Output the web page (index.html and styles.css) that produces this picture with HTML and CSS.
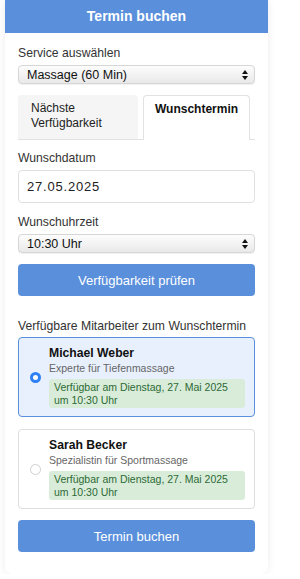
FILE: index.html
```html
<!DOCTYPE html>
<html lang="de">
<head>
    <meta charset="UTF-8">
    <meta name="viewport" content="width=device-width, initial-scale=1.0">
    <title>Termin buchen</title>
    <link rel="stylesheet" href="styles.css">
</head>
<body>
    <div class="booking">
        <div class="booking-header">Termin buchen</div>

        <div class="booking-body">
            <label class="field-label">Service auswählen</label>
            <div class="select">Massage (60 Min)<span class="select-arrows"></span></div>

            <!-- Tabs -->
            <div class="tabs">
                <div class="tab">Nächste Verfügbarkeit</div>
                <div class="tab tab-active">Wunschtermin</div>
            </div>

            <label class="field-label">Wunschdatum</label>
            <div class="date-input">27.05.2025</div>

            <label class="field-label">Wunschuhrzeit</label>
            <div class="select">10:30 Uhr<span class="select-arrows"></span></div>

            <button class="btn">Verfügbarkeit prüfen</button>

            <label class="field-label section-label">Verfügbare Mitarbeiter zum Wunschtermin</label>

            <div class="staff staff-selected">
                <span class="radio radio-checked"></span>
                <div class="staff-info">
                    <div class="staff-name">Michael Weber</div>
                    <div class="staff-role">Experte für Tiefenmassage</div>
                    <div class="staff-slot">Verfügbar am Dienstag, 27. Mai 2025 um 10:30 Uhr</div>
                </div>
            </div>

            <div class="staff">
                <span class="radio"></span>
                <div class="staff-info">
                    <div class="staff-name">Sarah Becker</div>
                    <div class="staff-role">Spezialistin für Sportmassage</div>
                    <div class="staff-slot">Verfügbar am Dienstag, 27. Mai 2025 um 10:30 Uhr</div>
                </div>
            </div>

            <button class="btn">Termin buchen</button>
        </div>
    </div>
</body>
</html>
```

FILE: styles.css
```css
* {
    margin: 0;
    padding: 0;
    box-sizing: border-box;
}

body {
    font-family: 'Liberation Sans', Arial, sans-serif;
    background-color: #fff;
    color: #222;
}

.booking {
    width: 263px;
    margin-left: 5px;
    background-color: #fff;
    border-radius: 0 0 8px 8px;
    box-shadow: 0 0 8px rgba(0, 0, 0, 0.08);
    overflow: hidden;
}

.booking-header {
    height: 33px;
    line-height: 33px;
    background-color: #5a8fdc;
    color: #fff;
    font-size: 14px;
    font-weight: bold;
    text-align: center;
}

.booking-body {
    display: flex;
    flex-direction: column;
    padding: 12px 13px 22px;
}

.field-label {
    font-size: 12.2px;
    line-height: 16px;
    color: #333;
    margin-bottom: 4px;
}

.select {
    position: relative;
    height: 19px;
    line-height: 18px;
    padding-left: 8px;
    font-size: 12.5px;
    color: #111;
    border: 1px solid #d6d6d6;
    border-radius: 4px;
    background: linear-gradient(#fdfdfd, #e9e9e9);
    box-shadow: 0 1px 1px rgba(0, 0, 0, 0.06);
}

.select-arrows {
    position: absolute;
    right: 6px;
    top: 4px;
    width: 6px;
    height: 10px;
}

.select-arrows::before,
.select-arrows::after {
    content: '';
    position: absolute;
    left: 0;
    border-left: 3px solid transparent;
    border-right: 3px solid transparent;
}

.select-arrows::before {
    top: 0;
    border-bottom: 4px solid #111;
}

.select-arrows::after {
    bottom: 0;
    border-top: 4px solid #111;
}

/* Tabs */
.tabs {
    display: flex;
    gap: 5px;
    margin-top: 11px;
    margin-bottom: 10px;
    border-bottom: 1px solid #e2e2e2;
}

.tab {
    width: 120px;
    height: 44px;
    padding: 6px 13px 0;
    font-size: 12px;
    line-height: 15px;
    color: #222;
    background-color: #f5f5f5;
    border-radius: 4px 4px 0 0;
}

.tab-active {
    width: 107px;
    padding: 6px 0 0;
    margin-bottom: -1px;
    height: 45px;
    text-align: center;
    font-weight: bold;
    color: #111;
    background-color: #fff;
    border: 1px solid #e2e2e2;
    border-bottom: none;
}

.date-input {
    height: 33px;
    line-height: 31px;
    padding-left: 8px;
    margin-bottom: 11px;
    font-size: 13px;
    letter-spacing: 0.8px;
    color: #222;
    border: 1px solid #e0e0e0;
    border-radius: 4px;
}

.btn {
    height: 32px;
    margin-top: 11px;
    background-color: #5a8fdc;
    color: #fff;
    border: none;
    border-radius: 4px;
    font-family: inherit;
    font-size: 13px;
}

.section-label {
    margin-top: 22px;
    margin-bottom: 3px;
}

/* Staff cards */
.staff {
    display: flex;
    align-items: center;
    padding: 8px 9px 8px 11px;
    margin-bottom: 12px;
    border: 1px solid #dedede;
    border-radius: 4px;
    background-color: #fff;
}

.staff + .btn {
    margin-top: -1px;
}

.staff-selected {
    background-color: #e8f0fd;
    border-color: #5a8fdc;
}

.radio {
    flex: none;
    width: 11px;
    height: 11px;
    margin-right: 8px;
    border: 1px solid #cfcfcf;
    border-radius: 50%;
    background-color: #fff;
}

.radio-checked {
    border: 3px solid #2f7ff5;
}

.staff-info {
    flex: 1;
}

.staff-name {
    font-size: 12.2px;
    line-height: 15px;
    font-weight: bold;
    color: #111;
}

.staff-role {
    font-size: 10.5px;
    line-height: 13px;
    color: #666;
    margin-top: 1px;
}

.staff-slot {
    margin-top: 4px;
    padding: 2px 5px;
    font-size: 10.5px;
    line-height: 12.6px;
    color: #2c6a34;
    background-color: #d9ecda;
    border-radius: 3px;
}
```
